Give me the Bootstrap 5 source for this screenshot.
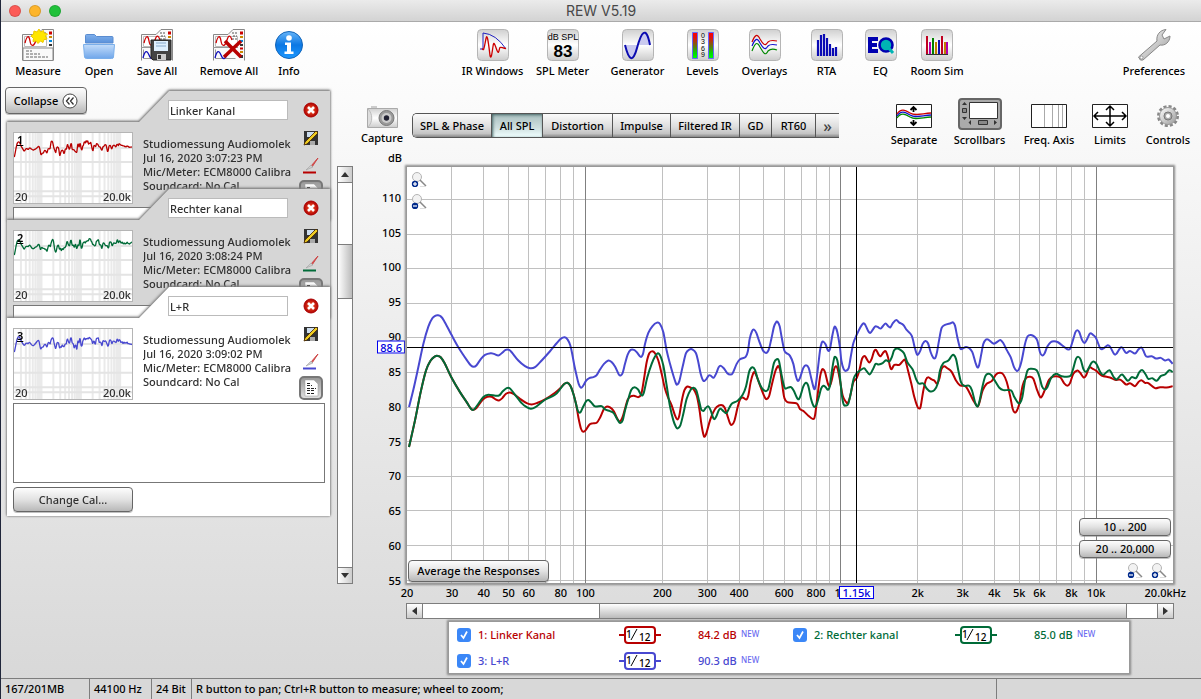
<!DOCTYPE html>
<html lang="en">
<head>
<meta charset="utf-8">
<meta name="viewport" content="width=device-width, initial-scale=1">
<title>REW V5.19</title>
<link href="https://cdn.jsdelivr.net/npm/bootstrap@5.3.0/dist/css/bootstrap.min.css" rel="stylesheet">
<style>
:root{--red:#b80000;--green:#006b38;--blue:#4848d0;--line:#7d7d7d}
body{font:500 11px/14px "Noto Sans","DejaVu Sans",sans-serif;color:#000;min-height:100vh;background:linear-gradient(#fff 20px,#fcfcfc 80px,#d7d7d7);border-left:1px solid #20263a}
button,input,textarea{font:inherit;color:inherit}
.title-bar{height:22px;background:linear-gradient(#ebebeb,#d3d3d3);border-bottom:1px solid #aaa;font:14px/22px Inter,sans-serif;color:#484848}
.lamps{left:8px;top:5px}
.lamp{width:12px;height:12px;border-radius:50%;border:1px solid #0002}
.tools{height:65px;padding-bottom:9px}
.tool-group{display:grid}
.tools-a{grid-template-columns:74px 48px 68px 76px 44px}
.tools-b{grid-template-columns:74px 66px 84px 46px 78px 46px 62px 51px}
.tools-c{grid-template-columns:94px}
.tools-d{grid-template-columns:60px 71px 68px 54px 62px;padding-right:2px}
.tool{border:0;background:none;padding:0;display:flex;flex-direction:column;align-items:center;justify-content:flex-end;white-space:nowrap;gap:3px}
.tool svg{display:block}
.tool span{align-self:center;margin:0 -10px}
.mac-btn{border:1px solid #666;border-radius:4px;background:linear-gradient(#fdfdfd,#e2e2e2 50%,#b8b8b8);padding:0;text-align:center;box-shadow:0 1px 0 #8888}
.left-pane{width:336px;padding-left:4px;flex:none}
.collapse-btn{width:82px;height:27px;position:absolute;left:0;top:0;z-index:2}
.meas-wrap{filter:drop-shadow(0 0 1px #777) drop-shadow(0 -1px 1px #888);margin-left:2px;width:323px}
.meas-wrap+.meas-wrap{margin-top:-32px}
.meas{background:#d6d6d6;height:130px;overflow:hidden;clip-path:polygon(0 31px,132px 31px,162px 0,100% 0,100% 100%,0 100%);color:#303030;padding:0 5px 0 6px}
.meas.sel{background:#fff;height:229px}
.meas-name{width:120px;height:20px;margin:9px 0 12px 155px;border:1px solid #bbb;background:#fff;padding:0 1px}
.thumb{width:120px;height:72px;position:relative;background:#fff;border:1px solid #b5b5b5;flex:none}
.thumb svg{position:absolute;inset:0;width:100%;height:100%}
.thumb b,.thumb i{position:absolute;font-style:normal;line-height:12px}
.thumb b{left:3px;top:1px;color:#000;text-decoration:underline;font-weight:600}
.thumb .t-lo{left:1px;bottom:0}.thumb .t-hi{right:1px;bottom:0}
.info{width:149px;white-space:nowrap;overflow:hidden;padding-top:5px;margin-left:10px}
.side{width:24px;flex:none;gap:12px;padding-top:11px;margin-right:2px}
.side button{border:0;background:none;padding:0;display:block;height:16px;line-height:0}
.side button.note-btn{border:2px solid #777;border-radius:5px;background:linear-gradient(#999,#ddd);height:24px;width:24px;margin-top:-6px;flex:none}
.notes{display:block;width:100%;height:80px;border:1px solid #777;background:#fff;resize:none;margin:3px 0 4px;padding:2px}
.change-btn{width:120px;height:25px}
.vbar{width:16px;margin:79px 0 94px;border:1px solid var(--line);background:#fff;flex:none}
.vbar .arrow{height:15px;background:linear-gradient(90deg,#fff,#ccc)}
.arrow{border:0;padding:0;display:flex;align-items:center;justify-content:center;flex:none;color:#333;line-height:0}
.v-lead{flex:61 0 0;border-top:1px solid var(--line)}.v-thumb{flex:54 0 0;background:linear-gradient(90deg,#fff,#bbb);border:solid var(--line);border-width:1px 0}.v-tail{flex:270 0 0;border-bottom:1px solid var(--line)}
.graph-side{min-width:0}
.graph-head{height:64px}
.capture-btn{width:58px;padding-bottom:6px}
.tabs{height:25px;margin:26px 0 0 1px;border:1px solid #555;border-right:0;border-radius:5px 0 0 5px;overflow:hidden}
.tabs button{border:0;border-right:1px solid #555;background:linear-gradient(#fbfbfb,#dedede 55%,#c4c4c4 85%,#888);padding:0;height:23px;flex:none}
.tabs button:last-child{border-right:0;color:#444;font-size:16px}
.tabs .on{background:linear-gradient(#a9bfbf,#cfdfdf 60%,#f0ffff);box-shadow:inset 1px 1px 3px #466}
.y-axis{width:53px;flex:none;position:relative}
.y-axis span{position:absolute;right:5px;transform:translateY(-50%)}
.y-axis .mark-y,.x-axis .mark-x{border:1px solid #00e;background:#fff;color:#00d;padding:0 2px;line-height:11px}
.y-axis .mark-y{right:1px}
.plot{position:relative;background:#fff;border:1px solid #999;box-shadow:0 0 2px 1px #888;margin:1px 27px 0 0;min-height:260px}
.plot>svg{position:absolute;inset:0;width:100%;height:100%}
.plot path,.thumb path{fill:none;vector-effect:non-scaling-stroke}
.over{position:absolute}
.zoom-btn{border:0;background:none;padding:0;line-height:0}
.lens-col{gap:6px}
.x-axis{height:19px;position:relative;margin:0 28px 0 54px}
.x-axis span{position:absolute;top:2px;transform:translateX(-50%);white-space:nowrap}
.x-axis .mark-x{padding:0 2px;z-index:1}
.hbar{height:16px;border:1px solid var(--line);background:#fff;margin:0 27px 0 53px}
.hbar .arrow{width:15px;background:linear-gradient(#fff,#ccc)}
.h-lead{flex:177 0 0;border-left:1px solid var(--line)}.h-thumb{flex:528 0 0;background:linear-gradient(#fff,#bbb);border:solid var(--line);border-width:0 1px}.h-tail{flex:30 0 0;border-right:1px solid var(--line)}
.legend-box{margin:2px 71px 4px 95px;background:#fff;border:1px solid #999;box-shadow:0 0 2px 1px #888;display:grid;grid-template-columns:repeat(2,minmax(0,336px));row-gap:1px;padding-left:8px}
.entry{height:25px;display:flex;align-items:center}
.entry input{appearance:none;width:14px;height:14px;border-radius:3px;margin:0 7px 0 0;background:#3b87f7 url("data:image/svg+xml,%3Csvg xmlns='http://www.w3.org/2000/svg' viewBox='0 0 14 14'%3E%3Cpath d='M4 7l2.500 3L10 3.500' fill='none' stroke='white' stroke-width='1.700'/%3E%3C/svg%3E")}
.entry label{width:141px}
.entry .lvl{width:43px;margin-left:37px}
.entry .fresh{font-size:8px;color:#6a6af0;padding-bottom:2px}
.c-red{color:var(--red)}.c-green{color:var(--green)}.c-blue{color:var(--blue)}
.status{height:21px;border-top:1px solid var(--line);background:#d8d8d8;line-height:20px}
.status div{border-right:1px solid var(--line);padding-left:4px;white-space:nowrap}
.s1{width:89px}.s2{width:62px}.s3{width:40px}.s4{width:805px}
</style>
</head>
<body class="d-flex flex-column">
<svg width="0" height="0" class="position-absolute" aria-hidden="true">
<defs>
<linearGradient id="tile" x2="0" y2="1"><stop stop-color="#d0d0d0"/><stop offset=".5" stop-color="#fff"/><stop offset="1" stop-color="#ccc"/></linearGradient>
<linearGradient id="fold" x2="0" y2="1"><stop stop-color="#c4ddfa"/><stop offset="1" stop-color="#6fa6ea"/></linearGradient>
<linearGradient id="fold2" x2="0" y2="1"><stop stop-color="#7fb0ec"/><stop offset="1" stop-color="#5a91da"/></linearGradient>
<linearGradient id="blueball" x2="0" y2="1"><stop stop-color="#66b4f8"/><stop offset=".5" stop-color="#0b78e4"/><stop offset="1" stop-color="#1c98ff"/></linearGradient>
<linearGradient id="lev" x2="0" y2="1"><stop stop-color="#f00"/><stop offset=".2" stop-color="#e01010"/><stop offset=".6" stop-color="#4a8a10"/><stop offset=".8" stop-color="#0d0"/><stop offset="1" stop-color="#0f0"/></linearGradient>
<linearGradient id="steel" x2="1" y2="1"><stop stop-color="#fff"/><stop offset="1" stop-color="#999"/></linearGradient>
<radialGradient id="redball"><stop stop-color="#f63"/><stop offset="1" stop-color="#b00000"/></radialGradient>
<g id="box"><rect x=".5" y=".5" width="31" height="31" rx="4" fill="url(#tile)" stroke="#b5b5b5"/></g>
<g id="sheet">
<path d="M.5 31.500V5.500H15L20 .500H31.500V31.500" fill="#fafafa" stroke="#888"/>
<path d="M2.500 7.500h22v10h-22z" fill="#fff" stroke="#bbb"/><path d="M3 14c2-8 4-8 5-2s4 6 6-1 4-3 5 0" fill="none" stroke="#c00" stroke-width="1.300"/>
<path d="M19 4h5M20 7h4M19 10h5" stroke="#555" stroke-width="1" stroke-dasharray="2 1"/>
<path d="M27 2.500h3v3h-3z" fill="#c00"/><path d="M27 7h3v2h-3z" fill="#c80"/><path d="M27 11h3v2h-3z" fill="#08d"/><path d="M27 15h3v2h-3z" fill="#333"/>
</g>
<g id="sheet2"><use href="#sheet"/><path d="M0 18.500h25M2.500 20.500v9h20" fill="none" stroke="#999"/><path d="M2 29c2-8 4-8 6-3s4 5 7-2" fill="none" stroke="#11b" stroke-width="1.300"/><path d="M27 18.500h3v2h-3z" fill="#c00"/><path d="M27 22h3v2h-3z" fill="#c80"/><path d="M27 26h3v3h-3z" fill="#333"/></g>
<g id="floppy"><path d="M0 0h20v20H2l-2-2z" fill="#444" stroke="#222"/><path d="M3 1h14v10H3z" fill="#dff0ff"/><path d="M5 3h10M5 6h10" stroke="#8ac"/><path d="M6 14h9v6H6z" fill="#ccc"/><path d="M7 15h3v4H7z" fill="#333"/></g>
<g id="lens"><circle cx="6" cy="6" r="4.500" fill="#f2f2f2" stroke="#b4b4b4"/><path d="M9 9l6 6" stroke="#888" stroke-width="1.500"/><path d="M9 15.500h6" stroke="#ddd"/><circle cx="4" cy="13" r="3.200" fill="#002a8c"/><path d="M2 13h4" stroke="#fff" stroke-width="1.200"/></g>
<g id="close"><circle cx="8" cy="8" r="7" fill="url(#redball)" stroke="#a00"/><path d="M5 5l6 6M11 5l-6 6" stroke="#fff" stroke-width="2.600"/></g>
<g id="saveone"><path d="M1 1h14v14H2l-1-1z" fill="#333"/><path d="M4 2h7v5H4z" fill="#cde"/><path d="M7 11h5v4H7z" fill="#aaa"/><path d="M1 15l1-3L13 1l2 2L4 14z" fill="#ec2" stroke="#420" stroke-width=".8"/></g>
<g id="brush"><path d="M15 0L8 8l1 1z" stroke="#c44" fill="#d66"/><path d="M8 7l2 2-7 3z" fill="#ccc" stroke="#999" stroke-width=".5"/></g>
<g id="noteicon"><path d="M3 1h9l4 4v12H3z" fill="#fff" stroke="#999" stroke-width=".5"/><path d="M5 4.500h4M5 6.500h5M5 9.500h9M5 11.500h7M5 14.500h8" stroke="#222" stroke-dasharray="3 1"/></g>
</defs>
</svg>

<header class="title-bar text-center position-relative">
  <div class="lamps d-flex gap-2 position-absolute"><span class="lamp" style="background:#fc5b57"></span><span class="lamp" style="background:#fdb52c"></span><span class="lamp" style="background:#20c13a"></span></div>
  REW V5.19
</header>

<nav class="tools d-flex justify-content-between" aria-label="Main tools">
  <div class="tool-group tools-a">
    <button class="tool"><svg width="32" height="32"><use href="#sheet"/><path d="M1 19h30v12.500H1z" fill="#fafafa" stroke="#888"/><path d="M4 22h6M4 25h14M4 28h22" stroke="#666" stroke-dasharray="3 1"/><path d="M17 0l1.500 3 3-1.500L22 4l3.500 1-2 2 1.500 3-3 .5-1 3-2.500-1.500L16 14.500 14 12l-3 .5.500-3L9 7l2.500-2L12 2l3 1z" fill="#ffe600" stroke="#eec900"/></svg><span>Measure</span></button>
    <button class="tool"><svg width="32" height="32"><path d="M2.500 14V6.500q0-1 1-1h8l2 2H29q1 0 1 1V14z" fill="url(#fold2)" stroke="#5a8cd0"/><path d="M.500 15.500h31l-1 12.500q0 1.500-2 1.500h-25q-1.500 0-2-1.500z" fill="url(#fold)" stroke="#79aeea"/></svg><span>Open</span></button>
    <button class="tool"><svg width="32" height="32"><use href="#sheet2"/><use href="#floppy" x="10" y="11"/></svg><span>Save All</span></button>
    <button class="tool"><svg width="32" height="32"><use href="#sheet2"/><path d="M12 12l16 16M28 12L11 28" stroke="#b80000" stroke-width="3.500"/></svg><span>Remove All</span></button>
    <button class="tool"><svg width="32" height="32"><circle cx="16" cy="16" r="13.500" fill="url(#blueball)" stroke="#1264b8"/><circle cx="16" cy="9" r="2.800" fill="#fff"/><path d="M12 13.500h6v9h2.500V25h-9v-2.500H14V16h-2z" fill="#fff"/></svg><span>Info</span></button>
  </div>
  <div class="tool-group tools-b">
    <button class="tool"><svg width="32" height="32"><use href="#box"/><path d="M3 20h3V4q13 1 23 16" fill="none" stroke="#2020c0"/><path d="M5 19.500c2 3 2 0 4-10 1-5 2 0 4 17 1 5 2-2 3-9s2-1 4 4 2-2 3-3 3 1 6 1" fill="none" stroke="#c00" stroke-width="1.300"/></svg><span>IR Windows</span></button>
    <button class="tool"><svg width="32" height="32"><use href="#box"/><text x="16" y="11" font-size="9" text-anchor="middle" font-family="Liberation Sans">dB SPL</text><text x="16" y="28" font-size="17" font-weight="700" text-anchor="middle" font-family="Liberation Sans">83</text></svg><span>SPL Meter</span></button>
    <button class="tool"><svg width="32" height="32"><use href="#box"/><path d="M3 16c4 12 7 19 12 3V16zM16 16h12C26 0 20-2 16 16" fill="#c9c9ef"/><path d="M3 16c4 16 8 18 12 3S24-5 28 16" fill="none" stroke="#0b0bb0" stroke-width="2"/></svg><span>Generator</span></button>
    <button class="tool"><svg width="32" height="32"><use href="#box"/><path d="M5.500 3.500h5v26h-5zM21.500 3.500h5v26h-5z" fill="url(#lev)" stroke="#66f"/><g font-size="7" text-anchor="middle" font-family="Liberation Sans"><text x="16" y="9">0</text><text x="16" y="15">3</text><text x="16" y="22">6</text><text x="16" y="28">9</text></g></svg><span>Levels</span></button>
    <button class="tool"><svg width="32" height="32"><use href="#box"/><g fill="none" stroke-width="1.200"><path d="M3 13c3-7 5-9 8-3 3 5 5 8 8 3 2-2 4-2 9-1" stroke="#c00"/><path d="M3 17c3-7 5-9 8-3 3 5 5 8 8 3 2-2 4-2 9-1" stroke="#11c"/><path d="M3 22c3-8 5-10 8-4 3 5 5 10 8 4 2-2 4-3 9-1" stroke="#080"/></g></svg><span>Overlays</span></button>
    <button class="tool"><svg width="32" height="32"><use href="#box"/><path d="M7 27V11M10 27V6M13 27V5M16 27V9M19 27V15M22 27V19M25 27V18" stroke="#0a0ab4" stroke-width="2.200"/></svg><span>RTA</span></button>
    <button class="tool"><svg width="32" height="32"><use href="#box"/><path d="M3 8h10v4H7v2h5v4H7v2h6v4H3z" fill="#0000b0"/><circle cx="21" cy="16" r="6.500" fill="#00b4b4" stroke="#0000b0" stroke-width="2.600"/><path d="M21 16l7 8" stroke="#00b4b4" stroke-width="3"/></svg><span>EQ</span></button>
    <button class="tool"><svg width="32" height="32"><use href="#box"/><g stroke-width="2"><path d="M6 25V7M21 25V7" stroke="#c00020"/><path d="M9 25V13M26 25V13" stroke="#b000b0"/><path d="M12 25V9" stroke="#008000"/><path d="M15 25V13M24 25V13" stroke="#c08000"/><path d="M18 25V11" stroke="#1010b0"/></g><path d="M5 25.500h22" stroke="#333"/></svg><span>Room Sim</span></button>
  </div>
  <div class="tool-group tools-c">
    <button class="tool"><svg width="34" height="32"><path d="M1.500 28L20 12c-1-6 3-11 9-11.500L25 6l2 4 6-3c0 6-5 10-10 9L6 31q-3 1.500-4.500-3z" fill="url(#steel)" stroke="#888"/><circle cx="4.500" cy="28.500" r="1.500" fill="#fff" stroke="#999"/></svg><span>Preferences</span></button>
  </div>
</nav>

<main class="d-flex flex-grow-1">
  <section class="left-pane position-relative" aria-label="Measurements">
    <div class="position-relative pt-1">
      <button class="mac-btn collapse-btn d-flex align-items-center justify-content-center gap-1">Collapse <svg width="16" height="16"><circle cx="8" cy="8" r="7" fill="#fff" stroke="#444"/><path d="M7.500 4.500L4.500 8l3 3.500M11.500 4.500L8.500 8l3 3.500" fill="none" stroke="#333" stroke-width="1.300"/></svg></button>
      <div id="cards"></div>
    </div>
  </section>

  <div class="vbar d-flex flex-column" role="presentation">
    <button class="arrow" aria-label="Up"><svg width="8" height="5"><path d="M0 5l4-5 4 5z" fill="#333"/></svg></button>
    <div class="v-lead"></div><div class="v-thumb"></div><div class="v-tail"></div>
    <button class="arrow" aria-label="Down"><svg width="8" height="5"><path d="M0 0l4 5 4-5z" fill="#333"/></svg></button>
  </div>

  <section class="graph-side d-flex flex-column flex-grow-1" aria-label="Graph">
    <div class="graph-head d-flex">
      <button class="tool capture-btn"><svg width="31" height="22"><path d="M4 0h6v3H4z" fill="#ccc"/><path d="M.500 2.500h30v19H.500z" fill="url(#tile)" stroke="#aaa"/><path d="M1 3c5 5 5 13 0 18" fill="#ddd" stroke="#bbb"/><circle cx="19.500" cy="12" r="7.500" fill="#999" stroke="#777"/><circle cx="19.500" cy="12" r="5" fill="#ccc"/><circle cx="19.500" cy="12" r="2.700" fill="#223"/></svg><span>Capture</span></button>
      <div class="tabs d-flex">
        <button style="width:79px">SPL &amp; Phase</button><button class="on" style="width:51px">All SPL</button><button style="width:70px">Distortion</button><button style="width:58px">Impulse</button><button style="width:69px">Filtered IR</button><button style="width:32px">GD</button><button style="width:44px">RT60</button><button style="width:23px">»</button>
      </div>
      <div class="tool-group tools-d ms-auto pb-1">
        <button class="tool"><svg width="36" height="28"><path d="M.500 2.500h35v23H.500z" fill="#fff" stroke="#222"/><g fill="none" stroke-width="1.300"><path d="M1 12C5 6 9 8 14 11s10 1 21 0" stroke="#c00"/><path d="M1 14C5 8 9 10 14 13s10 1 21 0" stroke="#11c"/><path d="M1 16c4-6 8-4 13-1s10 1 21 0" stroke="#080"/><path d="M17.500 5v5M14.500 8l3-3 3 3M17.500 18v5M14.500 20l3 3 3-3" stroke="#000" stroke-width="1.800"/></g></svg><span>Separate</span></button>
        <button class="tool"><svg width="44" height="32"><rect x="1" y="1" width="42" height="30" rx="3" fill="#aaa" stroke="#666" stroke-width="2"/><path d="M11.500 4.500h28v16h-28z" fill="#fff" stroke="#333"/><path d="M4 7l2.500-3L9 7zM4 19h5l-2.500 3zM13 22v5l-2.500-2.500zM36 22v5l3-2.500z" fill="#333"/><path d="M4.500 10.500h4v4h-4zM20.500 22.500h9v4h-9z" fill="#888" stroke="#333"/></svg><span>Scrollbars</span></button>
        <button class="tool"><svg width="36" height="28"><path d="M.500 2.500h35v23H.500z" fill="#fff" stroke="#222"/><path d="M13.500 3v22M21.500 3v22M27.500 3v22M31.500 3v22" stroke="#aaa"/></svg><span>Freq. Axis</span></button>
        <button class="tool"><svg width="36" height="28"><path d="M.500 2.500h35v23H.500z" fill="#fff" stroke="#222"/><path d="M2 14h32M18 4v20M6 10l-4 4 4 4M30 10l4 4-4 4M14 8l4-4 4 4M14 20l4 4 4-4" fill="none" stroke="#000" stroke-width="1.500"/></svg><span>Limits</span></button>
        <button class="tool"><svg width="24" height="28" viewBox="0 0 24 28"><circle cx="12" cy="14" r="9.500" fill="none" stroke="#888" stroke-width="3" stroke-dasharray="3 2"/><circle cx="12" cy="14" r="8.500" fill="url(#steel)" stroke="#999"/><circle cx="12" cy="14" r="4" fill="#aaa" stroke="#777"/><circle cx="12" cy="14" r="2" fill="#fff"/></svg><span>Controls</span></button>
      </div>
    </div>
    <div class="y-axis text-end pe-1">dB</div>
    <div class="d-flex flex-grow-1">
      <div class="y-axis" id="yaxis"></div>
      <div class="plot flex-grow-1">
        <svg viewBox="0 0 2298 1251" preserveAspectRatio="none" id="plot" role="img" aria-label="SPL over frequency"></svg>
        <div class="over top-0 start-0 p-1 d-flex flex-column lens-col">
          <button class="zoom-btn" aria-label="Zoom in level"><svg width="16" height="16"><use href="#lens"/><path d="M4 11v4" stroke="#fff" stroke-width="1.200"/></svg></button>
          <button class="zoom-btn" aria-label="Zoom out level"><svg width="16" height="16"><use href="#lens"/></svg></button>
        </div>
        <button class="mac-btn over bottom-0 start-0" style="margin:0 0 1px 1px;height:22px;width:141px">Average the Responses</button>
        <div class="over bottom-0 end-0 d-flex flex-column gap-1" style="width:92px;margin:0 2px 5px 0">
          <button class="mac-btn" style="height:18px;line-height:16px">10 .. 200</button>
          <button class="mac-btn" style="height:18px;line-height:16px">20 .. 20,000</button>
          <div class="d-flex justify-content-end gap-2 pe-1"><button class="zoom-btn" aria-label="Zoom out frequency"><svg width="16" height="16"><use href="#lens"/></svg></button><button class="zoom-btn" aria-label="Zoom in frequency"><svg width="16" height="16"><use href="#lens"/><path d="M4 11v4" stroke="#fff" stroke-width="1.200"/></svg></button></div>
        </div>
      </div>
    </div>
    <div class="x-axis" id="xaxis"></div>
    <div class="hbar d-flex" role="presentation">
      <button class="arrow" aria-label="Left"><svg width="5" height="8"><path d="M5 0L0 4l5 4z" fill="#333"/></svg></button>
      <div class="h-lead"></div><div class="h-thumb"></div><div class="h-tail"></div>
      <button class="arrow" aria-label="Right"><svg width="5" height="8"><path d="M0 0l5 4-5 4z" fill="#333"/></svg></button>
    </div>
    <div class="legend-box" id="legend"></div>
  </section>
</main>

<footer class="status d-flex"><div class="s1">167/201MB</div><div class="s2">44100 Hz</div><div class="s3">24 Bit</div><div class="s4">R button to pan; Ctrl+R button to measure; wheel to zoom;</div></footer>

<script>
// Each trace is stored in three horizontal sections: [x offset, "x,y x,y ..."].
const traces={
red:[[-21,"27,440 45,360 62,275 78,210 92,180 104,168 113,166 122,170 134,188 154,230 180,275 200,305 213,325 221,328 230,322 248,298 262,289 275,289 287,297 297,300 307,293 318,280 330,276 342,281 360,295 380,308 395,312 410,308 435,297 465,277 480,264 492,251 502,247 511,256 519,276 528,310 535,350 543,385 550,394 558,388 568,373 578,369 590,367 600,352 612,325 621,318 630,321 641,332 652,355 660,363 667,352 675,325 683,298 692,288 702,286 715,290 724,280 732,235 740,185 748,158 757,152"],
[699,"45,158 55,180 65,220 75,265 85,293 95,315 105,345 112,357 118,345 125,303 133,270 142,258 152,262 160,265 170,285 178,325 184,370 190,402 194,409 200,396 210,360 220,335 230,320 243,314 253,320 261,342 270,369 276,373 283,362 293,320 300,297 308,291 319,297 325,285 332,245 339,220 344,215 351,230 365,268 375,292 380,296 387,288 395,255 405,215 412,199 416,198 421,212 427,255 433,292 442,305 470,309 480,326 492,333 505,346 519,356 525,345 532,290 540,230 545,210 549,206 555,215 563,247 569,257 575,240 582,207 587,197 593,205 600,240 608,285 617,303 623,308 630,290 640,245 650,233 658,210 666,175 674,166 680,175 688,186 695,175 702,153 708,148 716,162 722,167 730,156 737,152 744,170 750,198 755,206 763,193 778,193"],
[1419,"70,180 76,180 84,210 94,250 103,290 112,318 117,324 122,318 130,270 138,237 145,230 155,237 163,240 171,250 178,235 184,207 192,197 202,203 215,214 228,240 240,255 255,256 265,270 280,300 293,318 300,300 308,270 320,250 335,242 348,222 360,217 370,222 380,244 390,285 398,325 404,336 410,332 418,310 428,255 438,233 450,229 460,235 470,265 480,289 487,286 497,262 507,238 520,228 540,230 552,248 562,256 570,248 580,220 592,210 600,216 611,231 618,225 628,201 638,205 650,212 665,225 690,231 705,238 722,238 738,252 750,248 765,257 775,245 784,239 795,247 805,248 825,263 840,260 860,261 878,257"]],
green:[[-21,"27,440 45,360 62,275 78,210 92,180 104,168 113,166 122,170 134,188 154,230 180,275 200,305 213,325 221,328 235,310 250,290 265,283 295,286 307,274 320,263 330,264 343,280 365,308 380,320 392,325 405,321 435,298 465,283 482,264 492,251 502,247 511,256 520,280 528,310 534,332 541,336 548,322 558,303 565,299 574,306 585,318 605,317 615,327 630,332 641,338 652,357 660,368 668,360 675,330 685,295 694,268 704,260 714,267 724,284 731,278 742,230 755,190 765,168 774,158"],
[699,"62,168 70,195 80,255 90,318 100,360 108,380 113,384 121,375 130,340 140,295 152,268 161,262 169,270 177,300 183,325 190,332 197,323 205,318 212,330 221,355 228,350 236,330 242,325 250,332 259,338 268,322 276,309 293,301 308,283 318,258 328,212 337,200 345,208 353,235 365,262 377,272 385,265 393,230 402,187 410,176 417,182 425,225 434,262 445,261 453,260 461,270 473,295 480,290 490,258 498,247 505,257 513,295 521,317 528,316 536,292 543,265 550,256 557,260 564,268 570,255 576,210 582,175 586,169 592,180 600,232 605,280 611,312 618,315 625,310 633,275 641,235 650,218 660,210 672,203 680,212 689,222 698,208 707,190 716,192 728,188 738,179 748,183 756,168 762,150 770,144"],
[1419,"60,147 72,158 82,185 98,207 108,235 116,249 130,249 140,264 151,273 163,269 173,250 180,210 190,188 205,180 215,166 221,163 228,175 235,210 243,245 252,256 268,256 276,270 286,308 293,318 299,300 307,260 316,227 325,220 335,225 346,243 358,262 370,269 393,270 402,288 413,306 420,308 427,290 435,240 443,209 455,205 470,209 478,228 486,258 494,267 502,260 514,232 528,220 545,227 570,227 578,210 588,175 595,169 602,177 610,205 617,214 624,207 634,188 641,183 650,191 660,213 670,223 688,209 700,228 710,237 726,222 743,241 755,230 768,233 778,215 787,209 797,222 805,235 817,233 830,241 842,227 855,222 868,209 878,215"]],
blue:[[-21,"27,320 40,268 55,200 70,130 85,78 97,53 107,45 113,44 122,47 132,60 154,102 175,140 200,178 213,195 221,199 229,195 243,175 255,163 272,158 282,160 295,165 305,158 317,148 327,148 335,155 355,180 375,197 390,203 405,200 425,180 450,152 470,128 483,114 494,110 503,117 511,135 517,162 523,195 529,222 536,250 543,262 550,255 558,241 568,233 580,230 590,224 600,207 612,190 625,180 634,184 645,198 656,221 662,225 668,217 675,190 683,162 692,148 702,148 711,156 722,169 729,160 735,130 745,97 757,77 771,66"],
[699,"60,70 70,95 80,150 90,190 100,225 108,249 112,252 118,242 128,198 138,158 148,147 158,147 168,158 175,185 182,220 190,241 199,236 206,225 213,226 221,232 229,218 236,200 243,196 252,204 262,218 270,222 278,218 290,190 300,176 317,169 324,150 329,115 336,92 342,87 349,97 357,120 368,148 378,157 386,148 394,115 402,78 408,65 413,64 419,77 425,110 433,150 440,158 450,166 460,190 466,220 473,241 480,232 490,202 498,194 506,202 513,230 522,265 527,255 533,210 540,150 545,127 550,123 557,132 564,150 570,145 576,110 582,82 586,79 592,95 600,142 604,180 611,206 618,211 626,203 632,170 640,128 650,103 660,82 670,68 676,73 685,92 691,97 699,86 706,77 713,79 722,84 729,76 737,69 744,76 751,80 759,67 769,58"],
[1419,"58,66 70,73 80,88 95,105 104,140 110,160 114,162 121,150 128,130 136,121 144,128 152,155 160,172 166,172 171,155 177,120 185,82 195,73 212,68 219,65 225,75 232,110 240,142 246,145 258,139 268,143 277,155 286,185 292,200 297,195 304,160 310,130 318,117 325,117 340,129 350,125 361,118 370,128 380,148 392,170 402,200 410,211 417,206 425,180 435,130 443,107 453,103 463,108 472,120 480,155 487,165 494,158 502,138 512,125 522,122 534,125 550,137 562,146 570,145 577,125 586,95 592,89 598,95 606,118 613,127 620,118 630,99 638,102 648,112 660,142 668,145 683,134 691,140 702,160 709,160 724,140 738,157 750,151 765,159 775,147 784,141 790,150 799,168 815,167 828,174 842,172 855,180 866,177 878,190"]]};

const fx=f=>766*Math.log10(f/20), dy=d=>514+(90-d)*20.8;

// Catmull-Rom spline through the sampled points
function curve(sections){
  const p=sections.flatMap(([o,s])=>s.split(" ").map(q=>{const [x,y]=q.split(",").map(Number);return [x+o,y+402]}));
  let d="M"+p[0];
  for(let i=0;i<p.length-1;i++){
    const a=p[i-1]||p[i],b=p[i],c=p[i+1],e=p[i+2]||c;
    d+=`C${b[0]+(c[0]-a[0])/6},${b[1]+(c[1]-a[1])/6} ${c[0]-(e[0]-b[0])/6},${c[1]-(e[1]-b[1])/6} ${c}`;
  }
  return d;
}
const paths={};for(const k in traces)paths[k]=curve(traces[k]);

let minor="",major="";
for(const dec of [10,100,1000,10000])for(let m=1;m<10;m++){const f=dec*m;if(f>20&&f<20000){const s=`M${fx(f)} 0V2400`;m==1?major+=s:minor+=s}}
let rows="";for(let d=110;d>=55;d-=5)rows+=`M0 ${dy(d)}H2298`;
const path=(d,c,w,extra="")=>`<path d="${d}" stroke="${c}" stroke-width="${w}" ${extra}/>`;
const crisp='shape-rendering="crispEdges"';
document.getElementById("plot").innerHTML=path(minor+rows,"#c0c0c0",1,crisp)+path(major,"#808080",1,crisp)
  +["blue","red","green"].map(k=>path(paths[k],`var(--${k})`,2)).join("")
  +path(`M0 ${dy(88.55)}H2298M${fx(1152)} 0V1251`,"#000",1,crisp);

let ys="";for(let d=110;d>=55;d-=5)ys+=`<span style="top:${dy(d)/12.51}%">${d}</span>`;
document.getElementById("yaxis").innerHTML=ys+`<span class="mark-y" style="top:${dy(88.55)/12.51}%">88.6</span>`;
const ticks=[20,30,40,50,60,80,100,200,300,400,600,800,1000,2000,3000,4000,5000,6000,8000,10000];
document.getElementById("xaxis").innerHTML=ticks.map(f=>`<span style="left:${fx(f)/22.98}%">${f<1000?f:f/1000+"k"}</span>`).join("")
  +`<span style="left:99%">20.0kHz</span><span class="mark-x" style="left:${fx(1152)/22.98}%">1.15k</span>`;

// name, time, colour, level at the cursor, top of the thumbnail's level range
const meas=[["Linker Kanal","3:07:23","red","84.2",410],["Rechter kanal","3:08:24","green","85.0",410],["L+R","3:09:02","blue","90.3",308]];
document.getElementById("cards").innerHTML=meas.map(([n,t,c,l,top],i)=>`
<div class="meas-wrap"><article class="meas ${i==2?"sel":""}">
 <div class="d-flex justify-content-between">
  <div><input class="meas-name d-block" value="${n}" aria-label="Name of measurement ${i+1}">
   <div class="d-flex"><div class="thumb"><svg viewBox="0 ${top} 2298 1251" preserveAspectRatio="none">${path(minor+major,"#eaeaea",2)}${path([270,780,1040,1130].map(y=>`M0 ${top+y}H2298`).join("")+`M0 ${top+520}H2298`,"#e4e4e4",2)}${path(paths[c],`var(--${c})`,1.3)}</svg><b>${i+1}</b><i class="t-lo">20</i><i class="t-hi">20.0k</i></div>
   <div class="info">Studiomessung Audiomolek<br>Jul 16, 2020 ${t} PM<br>Mic/Meter: ECM8000 Calibra<br>Soundcard: No Cal</div></div></div>
  <div class="side d-flex flex-column align-items-center">
   <button aria-label="Remove"><svg width="16" height="16"><use href="#close"/></svg></button>
   <button aria-label="Save"><svg width="16" height="16"><use href="#saveone"/></svg></button>
   <button aria-label="Trace colour"><svg width="16" height="16"><use href="#brush"/><path d="M0 14.500h13" stroke="var(--${c})" stroke-width="2"/></svg></button>
   <button class="note-btn" aria-label="Notes"><svg width="18" height="18"><use href="#noteicon"/></svg></button>
  </div>
 </div>
 <textarea class="notes" aria-label="Notes for measurement ${i+1}"></textarea>
 <button class="mac-btn change-btn">Change Cal...</button>
</article></div>`).join("");

document.getElementById("legend").innerHTML=meas.map(([n,,c,l],i)=>`
<div class="entry c-${c}"><input type="checkbox" id="m${i}" checked><label for="m${i}">${i+1}: ${n}</label>
<svg width="42" height="18"><path d="M0 9h6M36 9h6" stroke="var(--${c})" stroke-width="2"/><rect x="6" y="1" width="30" height="16" rx="3" fill="#fff" stroke="var(--${c})" stroke-width="2"/><text x="7" y="12" font-size="10">1</text><path d="M12 14L18 3" stroke="#000"/><text x="20" y="15" font-size="10">12</text></svg>
<span class="lvl">${l} dB</span><span class="fresh">NEW</span></div>`).join("");
</script>
<script src="https://cdn.jsdelivr.net/npm/bootstrap@5.3.0/dist/js/bootstrap.bundle.min.js"></script>
</body>
</html>
